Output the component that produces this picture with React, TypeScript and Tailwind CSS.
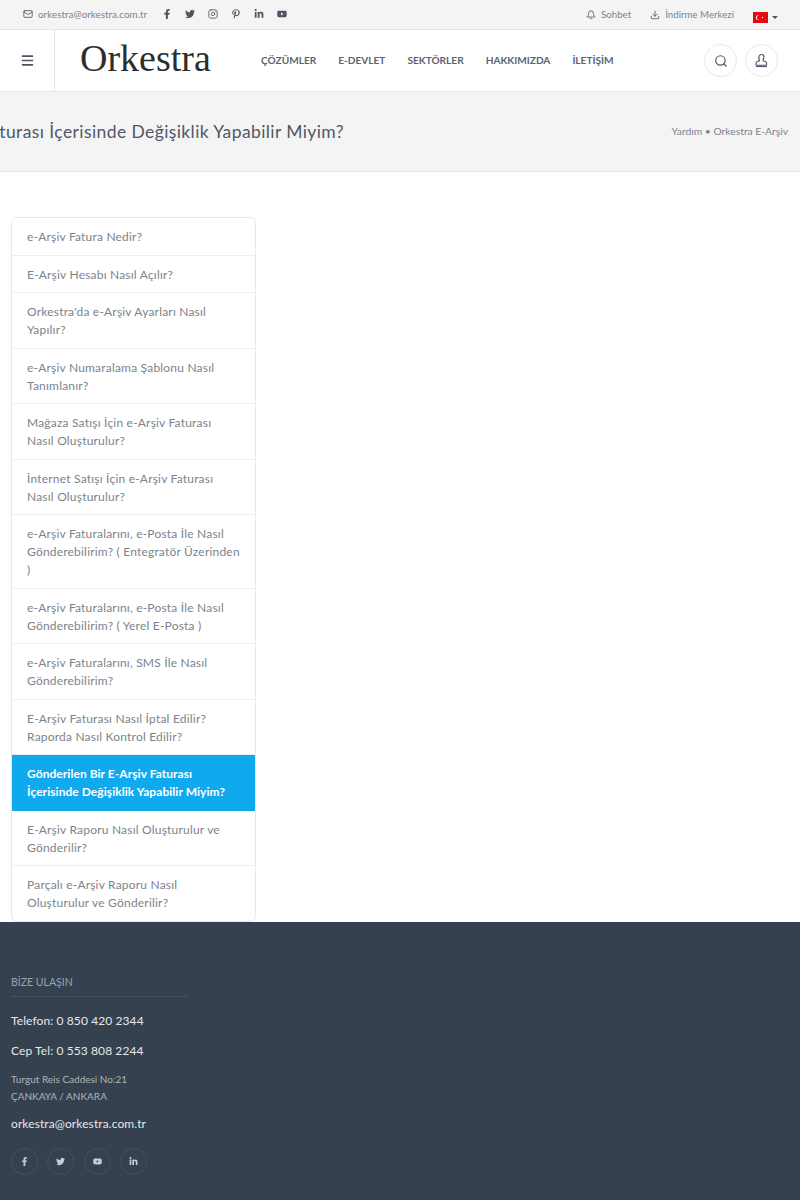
import { Bell, Download, Mail, Menu, Search, Instagram } from 'lucide-react';
import { FaFacebookF, FaTwitter, FaPinterestP, FaLinkedinIn, FaYoutube } from 'react-icons/fa';

const FONT = "font-['Lato','Open_Sans',sans-serif]";

const NAV = ['ÇÖZÜMLER', 'E-DEVLET', 'SEKTÖRLER', 'HAKKIMIZDA', 'İLETİŞİM'];

const ITEMS = [
  'e-Arşiv Fatura Nedir?',
  'E-Arşiv Hesabı Nasıl Açılır?',
  "Orkestra'da e-Arşiv Ayarları Nasıl Yapılır?",
  'e-Arşiv Numaralama Şablonu Nasıl Tanımlanır?',
  'Mağaza Satışı İçin e-Arşiv Faturası Nasıl Oluşturulur?',
  'İnternet Satışı İçin e-Arşiv Faturası Nasıl Oluşturulur?',
  'e-Arşiv Faturalarını, e-Posta İle Nasıl Gönderebilirim? ( Entegratör Üzerinden )',
  'e-Arşiv Faturalarını, e-Posta İle Nasıl Gönderebilirim? ( Yerel E-Posta )',
  'e-Arşiv Faturalarını, SMS İle Nasıl Gönderebilirim?',
  'E-Arşiv Faturası Nasıl İptal Edilir? Raporda Nasıl Kontrol Edilir?',
  'Gönderilen Bir E-Arşiv Faturası İçerisinde Değişiklik Yapabilir Miyim?',
  'E-Arşiv Raporu Nasıl Oluşturulur ve Gönderilir?',
  'Parçalı e-Arşiv Raporu Nasıl Oluşturulur ve Gönderilir?',
];

const ACTIVE = 10;

function UserIcon() {
  return (
    <svg viewBox="0 0 16 16" className="h-[15px] w-[15px] text-[#4b5563]" fill="none" stroke="currentColor" strokeWidth="1.2" strokeLinejoin="round">
      <path d="M5.4 4.2a2.6 2.6 0 0 1 5.2 0c0 1.5-.6 2.4-.9 3.2-.2.6.1 1 .7 1.2l2 .8c.7.3 1 .8 1 1.5v1.6c0 .3-.2.5-.5.5H2.6c-.3 0-.5-.2-.5-.5v-1.6c0-.7.3-1.2 1-1.5l2-.8c.6-.2.9-.6.7-1.2-.3-.8-.9-1.7-.9-3.2z" />
      <path d="M2.2 14.4h11.6" />
    </svg>
  );
}

function TopBar() {
  return (
    <div className="flex h-[29px] items-center justify-between bg-[#f4f4f5] pl-[23px] pr-[22px] text-[9.7px] text-[#7c838d]">
      <div className="flex items-center">
        <Mail className="h-[10px] w-[10px] text-[#4d5560]" />
        <span className="ml-[5px] text-[9.9px]">orkestra@orkestra.com.tr</span>
        <div className="ml-[15px] flex items-center gap-[13px] text-[#4b5563]">
          <FaFacebookF className="h-[10px] w-[10px]" />
          <FaTwitter className="h-[10px] w-[10px]" />
          <Instagram className="h-[10px] w-[10px]" />
          <FaPinterestP className="h-[10px] w-[10px]" />
          <FaLinkedinIn className="h-[10px] w-[10px]" />
          <FaYoutube className="h-[10px] w-[10px]" />
        </div>
      </div>
      <div className="flex items-center">
        <Bell className="h-[10px] w-[10px] text-[#4d5560]" />
        <span className="ml-[5px]">Sohbet</span>
        <Download className="ml-[19px] h-[10px] w-[10px] text-[#4d5560]" />
        <span className="ml-[5px]">İndirme Merkezi</span>
        <div className="relative ml-[19px] mt-[6px] h-[11px] w-[15px] bg-[#e30a17]">
          <div className="absolute left-[3px] top-[3px] h-[5px] w-[5px] rounded-full bg-white" />
          <div className="absolute left-[4px] top-[3px] h-[5px] w-[5px] rounded-full bg-[#e30a17]" />
          <div className="absolute left-[9px] top-[5px] h-[1px] w-[1px] bg-white" />
        </div>
        <div className="ml-[4px] mt-[5px] h-0 w-0 border-x-[3px] border-t-[3px] border-x-transparent border-t-[#555]" />
      </div>
    </div>
  );
}

function Header() {
  return (
    <header className="flex h-[63px] items-center border-y border-[#e5e5e7] bg-white">
      <div className="flex h-full w-[55px] shrink-0 items-center justify-center border-r border-[#e5e5e7]">
        <Menu className="h-[15px] w-[15px] text-[#4b5563]" strokeWidth={2.5} />
      </div>
      <div className="ml-[25px] mb-[6px] w-[181px] shrink-0 font-['Liberation_Serif',serif] text-[38px] leading-none text-[#2d2d2d]">
        Orkestra
      </div>
      <nav className="flex items-center gap-[22px] text-[10.1px] font-bold text-[#5b6470]">
        {NAV.map((n) => (
          <span key={n}>{n}</span>
        ))}
      </nav>
      <div className="ml-auto mr-[22px] flex items-center gap-[8px]">
        <div className="flex h-[33px] w-[33px] items-center justify-center rounded-full border border-[#e9e9eb]">
          <Search className="h-[14px] w-[14px] text-[#4b5563]" />
        </div>
        <div className="flex h-[33px] w-[33px] items-center justify-center rounded-full border border-[#e9e9eb]">
          <UserIcon />
        </div>
      </div>
    </header>
  );
}

function TitleBar() {
  return (
    <div className="flex h-[80px] items-center justify-between border-b border-[#e8e8ea] bg-[#f4f4f5] pr-[12px]">
      <div className="mt-[2px] flex w-[344px] justify-end overflow-hidden whitespace-nowrap text-[17.5px] tracking-[0.4px] text-[#4f5866]">
        Gönderilen Bir E-Arşiv Faturası İçerisinde Değişiklik Yapabilir Miyim?
      </div>
      <div className="text-[10.3px] text-[#7c838d]">Yardım • Orkestra E-Arşiv</div>
    </div>
  );
}

function SideList() {
  return (
    <div className="ml-[11px] mt-[45px] w-[245px] overflow-hidden rounded-[6px] border border-[#e8e9ee]">
      {ITEMS.map((item, i) => (
        <div
          key={item}
          className={
            i === ACTIVE
              ? 'bg-[#0fa9ee] px-[15px] pb-[9.25px] pt-[10.25px] text-[12px] font-bold leading-[18px] tracking-[0.05px] text-white'
              : 'border-b border-[#eceef1] px-[15px] pb-[8.25px] pt-[10.25px] text-[12px] leading-[18px] tracking-[0.2px] text-[#7c838d] last:border-b-0'
          }
        >
          {item}
        </div>
      ))}
    </div>
  );
}

function Footer() {
  const social = [FaFacebookF, FaTwitter, FaYoutube, FaLinkedinIn];
  return (
    <footer className="h-[278px] bg-[#36414f] pl-[11px] pt-[53px]">
      <div className="w-[177px] border-b border-[#465160] pb-[6px] text-[10.5px] text-[#9aa3ad]">
        BİZE ULAŞIN
      </div>
      <div className="mt-[16px] text-[12px] leading-[16px] tracking-[0.1px] text-[#e5e7eb]">Telefon: 0 850 420 2344</div>
      <div className="mt-[14px] text-[12px] leading-[16px] tracking-[0.1px] text-[#e5e7eb]">Cep Tel: 0 553 808 2244</div>
      <div className="mt-[12px] text-[10px] leading-[17px] text-[#aeb4bc]">
        Turgut Reis Caddesi No:21
        <br />
        ÇANKAYA / ANKARA
      </div>
      <div className="mt-[11px] text-[12px] leading-[16px] tracking-[0.1px] text-[#e5e7eb]">orkestra@orkestra.com.tr</div>
      <div className="mt-[16px] flex gap-[9.3px]">
        {social.map((Icon, i) => (
          <div key={i} className="flex h-[27px] w-[27px] items-center justify-center rounded-full border border-[#465160]">
            <Icon className="h-[9px] w-[9px] text-[#c9cdd3]" />
          </div>
        ))}
      </div>
    </footer>
  );
}

export default function App() {
  return (
    <div className={`h-[1200px] w-[800px] overflow-hidden bg-white ${FONT}`}>
      <TopBar />
      <Header />
      <TitleBar />
      <SideList />
      <Footer />
    </div>
  );
}
